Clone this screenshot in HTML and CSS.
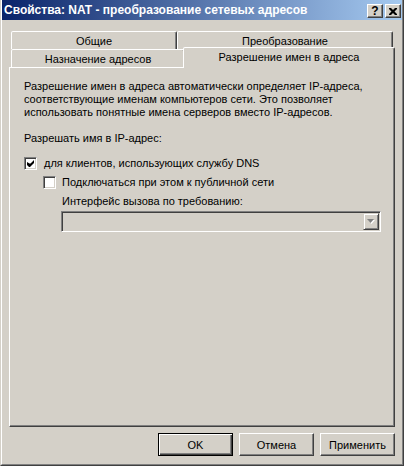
FILE: index.html
```html
<!DOCTYPE html>
<html>
	<head>
		<meta charset="UTF-8">
		<title>Свойства: NAT - преобразование сетевых адресов</title>
		<link rel="stylesheet" href="styles.css">
	</head>
	<body>
		<div class="window">
			<div class="frame">
				<div class="titlebar">
					<span class="title">Свойства: NAT - преобразование сетевых адресов</span>
					<div class="caption-btns">
						<span class="cap-btn help">?</span>
						<span class="cap-btn close">
							<svg width="8" height="7" viewBox="0 0 8 7"><path d="M0 0h2l2 2 2-2h2v1l-2.5 2.5 2.5 2.5v1h-2l-2-2-2 2h-2v-1l2.5-2.5-2.5-2.5z" fill="#000"/></svg>
						</span>
					</div>
				</div>

				<div class="client">
					<div class="tabs">
						<div class="tab-row">
							<div class="tab t-general">Общие</div>
							<div class="tab t-translate">Преобразование</div>
						</div>
						<div class="tab-row">
							<div class="tab t-assign">Назначение адресов</div>
							<div class="tab t-resolve selected">Разрешение имен в адреса</div>
						</div>
					</div>

					<div class="panel">
						<p class="intro">Разрешение имен в адреса автоматически определяет IP-адреса,<br>соответствующие именам компьютеров сети. Это позволяет<br>использовать понятные имена серверов вместо IP-адресов.</p>
						<p class="label">Разрешать имя в IP-адрес:</p>

						<label class="check">
							<span class="box">
								<svg width="7" height="7" viewBox="0 0 7 7"><path d="M0 2v3l2 2h1l4-4v-3l-3.5 3.5h-1z" fill="#000"/></svg>
							</span>
							<span>для клиентов, использующих службу DNS</span>
						</label>

						<label class="check sub">
							<span class="box"></span>
							<span>Подключаться при этом к публичной сети</span>
						</label>

						<div class="field">
							<div class="field-label">Интерфейс вызова по требованию:</div>
							<div class="combo">
								<span class="combo-btn">
									<svg width="8" height="5" viewBox="0 0 8 5"><path d="M1 1h7l-3.5 4z" fill="#fff"/><path d="M0 0h7l-3.5 4z" fill="#808080"/></svg>
								</span>
							</div>
						</div>
					</div>

					<div class="actions">
						<button class="btn default">OK</button>
						<button class="btn">Отмена</button>
						<button class="btn">Применить</button>
					</div>
				</div>
			</div>
		</div>
	</body>
</html>
```

FILE: styles.css
```css
body{
    margin: 0;
    padding: 0;
    background: #d4d0c8;
    font-family: "Liberation Sans", Arial, sans-serif;
    font-size: 11px;
    color: #000;
}
.window{
    width: 404px;
    height: 466px;
    box-sizing: border-box;
    border-left: 1px solid #d4d0c8;
    border-right: 1px solid #404040;
    border-bottom: 1px solid #404040;
}
.frame{
    height: 100%;
    box-sizing: border-box;
    border-left: 1px solid #fff;
    border-right: 1px solid #808080;
    border-bottom: 1px solid #808080;
    display: flex;
    flex-direction: column;
}

/* ---------- title bar ---------- */
.titlebar{
    height: 20px;
    background: linear-gradient(to right, #0a246a, #a6caf0);
    display: flex;
    align-items: flex-start;
    justify-content: space-between;
    padding: 0 1px 0 2px;
}
.title{
    color: #fff;
    font-weight: bold;
    font-size: 12px;
    line-height: 20px;
    white-space: nowrap;
}
.caption-btns{
    display: flex;
    gap: 2px;
    padding-top: 4px;
}
.cap-btn{
    width: 16px;
    height: 14px;
    box-sizing: border-box;
    background: #d4d0c8;
    border: 1px solid;
    border-color: #fff #404040 #404040 #fff;
    box-shadow: inset -1px -1px #808080;
    display: flex;
    align-items: center;
    justify-content: center;
}
.cap-btn.help{
    font-weight: bold;
    font-size: 12px;
    line-height: 12px;
}

/* ---------- client area ---------- */
.client{
    flex: 1;
    padding: 11px 7px 0 7px;
}
.tab-row{
    display: flex;
    align-items: flex-end;
    padding-left: 2px;
}
.tab{
    height: 18px;
    box-sizing: border-box;
    border: 1px solid;
    border-bottom: 0;
    border-color: #fff #404040 transparent #fff;
    border-radius: 2px 2px 0 0;
    box-shadow: inset -1px 0 #808080;
    background: #d4d0c8;
    text-align: center;
    padding-top: 3px;
    line-height: 13px;
    white-space: nowrap;
}
.t-general{ width: 166px; }
.t-translate{ width: 216px; }
.t-assign{ width: 174px; }
.tab.selected{
    width: 212px;
    height: 21px;
    margin: -2px 0 -1px -2px;
    position: relative;
    z-index: 1;
}

.panel{
    height: 360px;
    box-sizing: border-box;
    border: 1px solid;
    border-color: #fff #404040 #404040 #fff;
    box-shadow: inset -1px -1px #808080;
    padding: 12px 14px 0 14px;
    line-height: 13px;
}
.panel p{
    margin: 0;
}
.label{
    padding-top: 13px;
}
.check{
    display: flex;
    align-items: center;
    gap: 7px;
    margin-top: 12px;
}
.check.sub{
    margin: 6px 0 0 19px;
    gap: 6px;
}
.box{
    width: 13px;
    height: 13px;
    box-sizing: border-box;
    background: #fff;
    border: 1px solid;
    border-color: #808080 #fff #fff #808080;
    box-shadow: inset 1px 1px #404040, inset -1px -1px #d4d0c8;
    display: flex;
    align-items: center;
    justify-content: center;
}
.field{
    margin: 6px 0 0 37px;
}
.field-label{
    padding-left: 1px;
}
.combo{
    margin-top: 3px;
    width: 320px;
    height: 21px;
    box-sizing: border-box;
    background: #d4d0c8;
    border: 1px solid;
    border-color: #808080 #fff #fff #808080;
    box-shadow: inset 1px 1px #404040, inset -1px -1px #d4d0c8;
    padding: 1px;
    display: flex;
    justify-content: flex-end;
}
.combo-btn{
    width: 16px;
    height: 17px;
    box-sizing: border-box;
    border: 1px solid;
    border-color: #d4d0c8 #404040 #404040 #d4d0c8;
    box-shadow: inset 1px 1px #fff, inset -1px -1px #808080;
    display: flex;
    align-items: center;
    justify-content: center;
}

/* ---------- buttons ---------- */
.actions{
    display: flex;
    justify-content: flex-end;
    gap: 6px;
    margin-top: 6px;
}
.btn{
    width: 75px;
    height: 23px;
    box-sizing: border-box;
    background: #d4d0c8;
    border: 1px solid;
    border-color: #fff #404040 #404040 #fff;
    box-shadow: inset -1px -1px #808080;
    font-family: "Liberation Sans", Arial, sans-serif;
    font-size: 11px;
    font-weight: normal;
    color: #000;
    padding: 0;
}
.btn.default{
    border-color: #000;
    box-shadow: inset 1px 1px #fff, inset -1px -1px #404040, inset -2px -2px #808080;
}
```
